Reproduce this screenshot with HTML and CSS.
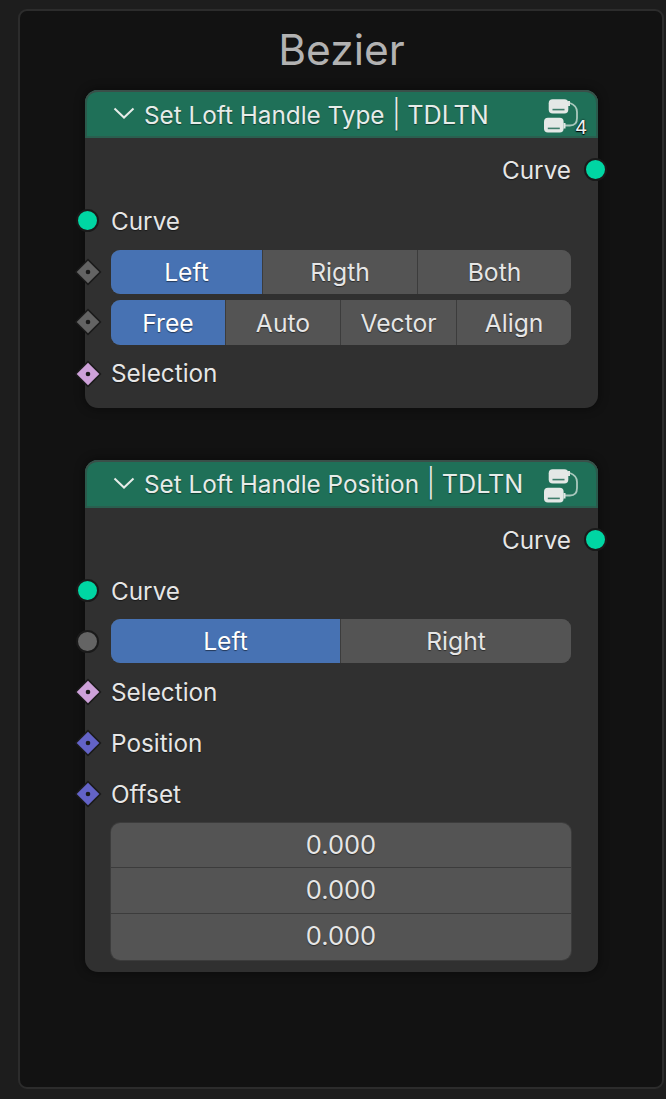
FILE: index.html
```html
<!DOCTYPE html>
<html lang="en">
<head>
<meta charset="utf-8">
<title>Bezier</title>
<link rel="stylesheet" href="styles.css">
</head>
<body>
<svg class="defs" width="0" height="0" aria-hidden="true">
  <defs>
    <symbol id="diamond" viewBox="0 0 28 28">
      <polygon points="14,0.5 27.5,14 14,27.5 0.5,14" fill="#1a1a1a"/>
      <polygon class="dfill" points="14,2.7 25.3,14 14,25.3 2.7,14"/>
      <circle cx="14" cy="14" r="2.3" fill="#1a1a1a"/>
    </symbol>
    <symbol id="nodeicon" viewBox="0 0 36 36">
      <path d="M27 5c4 1.500 7 4 7 9v6c0 5-3 7.500-7 7.500h-5" fill="none" stroke="#a9c8bd" stroke-width="1.800"/>
      <rect x="5.700" y="1.200" width="19.600" height="14.300" rx="4" fill="#e4e8e6"/>
      <rect x="9.500" y="10.800" width="12" height="1.600" fill="#3f7d6b"/>
      <rect x="1" y="19.700" width="19.600" height="14.800" rx="4" fill="#e4e8e6"/>
      <rect x="4.800" y="29.600" width="12" height="1.600" fill="#3f7d6b"/>
      <rect x="25" y="3" width="2" height="5" fill="#dfe6e3"/>
      <rect x="20.500" y="25" width="2" height="5.500" fill="#dfe6e3"/>
    </symbol>
  </defs>
</svg>
<main class="frame">
  <h1 class="title">Bezier</h1>

  <section class="node node-type">
    <header class="head">
      <svg class="chev" viewBox="0 0 22 12"><path d="M1.500 1.500 11 10.500l9.500-9"/></svg>
      <span class="head-text">Set Loft Handle Type<span class="sep">|</span><span class="tag">TDLTN</span></span>
      <svg class="nicon"><use href="#nodeicon"/></svg>
      <span class="count">4</span>
    </header>
    <div class="body">
      <div class="row right"><span>Curve</span><i class="sock circle teal out"></i></div>
      <div class="row"><i class="sock circle teal"></i><span>Curve</span></div>
      <div class="ctl-row">
        <svg class="sock dia grey"><use href="#diamond"/></svg>
        <div class="seg seg-lrb">
          <button class="on">Left</button><button>Rigth</button><button>Both</button>
        </div>
      </div>
      <div class="ctl-row second">
        <svg class="sock dia grey"><use href="#diamond"/></svg>
        <div class="seg seg-4">
          <button class="on">Free</button><button>Auto</button><button>Vector</button><button>Align</button>
        </div>
      </div>
      <div class="row tall"><svg class="sock dia pink"><use href="#diamond"/></svg><span>Selection</span></div>
    </div>
  </section>

  <section class="node node-pos">
    <header class="head">
      <svg class="chev" viewBox="0 0 22 12"><path d="M1.500 1.500 11 10.500l9.500-9"/></svg>
      <span class="head-text">Set Loft Handle Position<span class="sep">|</span><span class="tag">TDLTN</span></span>
      <svg class="nicon"><use href="#nodeicon"/></svg>
    </header>
    <div class="body">
      <div class="row right"><span>Curve</span><i class="sock circle teal out"></i></div>
      <div class="row"><i class="sock circle teal"></i><span>Curve</span></div>
      <div class="ctl-row">
        <i class="sock circle greyc"></i>
        <div class="seg seg-2">
          <button class="on">Left</button><button>Right</button>
        </div>
      </div>
      <div class="row"><svg class="sock dia pink"><use href="#diamond"/></svg><span>Selection</span></div>
      <div class="row"><svg class="sock dia blue"><use href="#diamond"/></svg><span>Position</span></div>
      <div class="row"><svg class="sock dia blue"><use href="#diamond"/></svg><span>Offset</span></div>
      <div class="vec">
        <div class="num">0.000</div>
        <div class="num">0.000</div>
        <div class="num">0.000</div>
      </div>
    </div>
  </section>
</main>
</body>
</html>
```
FILE: styles.css
```css
* { box-sizing: border-box; }
html, body { margin: 0; padding: 0; }
body {
  width: 666px;
  height: 1099px;
  overflow: hidden;
  background: #1d1d1d;
  font-family: Inter, "Liberation Sans", sans-serif;
  color: #e6e6e6;
}
.defs { display: block; height: 0; }
.frame {
  margin: 9px 2px 0 18px;
  height: 1080px;
  border: 2px solid #2c2c2c;
  border-radius: 9px;
  background: #121212;
  padding-left: 65px;
}
.title {
  margin: 0;
  width: 513px;
  height: 79px;
  padding-top: 12px;
  text-align: center;
  font-size: 42.500px;
  line-height: 54px;
  font-weight: 400;
  color: #b2b2b2;
}
.node {
  width: 513px;
  background: #303030;
  border-radius: 13px;
  box-shadow: 0 0 9px 2px rgba(0, 0, 0, .35);
}
.node-type { height: 318px; margin-bottom: 52px; }
.node-pos { height: 512px; }
.head {
  position: relative;
  display: flex;
  align-items: center;
  height: 48px;
  padding-left: 28px;
  background: #1f7058;
  border-radius: 13px 13px 0 0;
  box-shadow: inset 0 2px 0 #3a4f49, inset 2px 0 0 #2a5a4c, inset -2px 0 0 #2a5a4c, inset 0 -2px 0 #2a5f4f;
}
.chev {
  width: 22px;
  height: 12px;
  margin: -3px 9px 0 0;
  fill: none;
  stroke: #e6ece9;
  stroke-width: 2;
}
.head-text {
  padding-top: 2px;
  font-size: 24.300px;
  line-height: 48px;
  color: #e6ece9;
  white-space: nowrap;
  text-shadow: 0 1px 1px rgba(0, 0, 0, .45);
}
.node-pos .head-text { padding-top: 0; }
.sep {
  margin: 0 6.500px 0 7.500px;
  font-size: 28px;
  line-height: 1;
  font-weight: 300;
}
.tag { font-size: 25.200px; line-height: 1; }
.nicon {
  position: absolute;
  left: 458px;
  top: 8px;
  width: 36px;
  height: 36px;
}
.count {
  position: absolute;
  left: 490px;
  top: 26px;
  font-size: 19px;
  line-height: 24px;
  color: #eef2f0;
  text-shadow: 0 0 2px #000, 0 1px 1px #000;
}
.body {
  padding: 6px 27px 0 26px;
}
.row, .ctl-row { position: relative; }
.row {
  display: flex;
  align-items: center;
  height: 51px;
  font-size: 24.300px;
  text-shadow: 0 1px 1px rgba(0, 0, 0, .5);
}
.row.right { justify-content: flex-end; }
.row.tall { height: 52px; }
.ctl-row { height: 50px; padding-top: 4px; }
.ctl-row.second { height: 51px; }
.node-pos .ctl-row { padding-top: 3px; }
.sock { position: absolute; display: block; }
.circle {
  width: 23px;
  height: 23px;
  left: -35px;
  top: 50%;
  margin-top: -11.500px;
  border-radius: 50%;
  border: 2px solid #1a1a1a;
}
.circle.out { left: auto; right: -36px; }
.teal { background: #00d6a3; }
.greyc { background: #646464; margin-top: -11px; }
.dia {
  width: 28px;
  height: 28px;
  left: -37.200px;
  top: 50%;
  margin-top: -13.500px;
}
.grey { --d: #636363; }
.pink { --d: #cda1d9; }
.blue { --d: #6363c7; }
.dfill { fill: var(--d); }
.seg {
  display: grid;
  height: 44px;
  border-radius: 9px;
  overflow: hidden;
  background: #545454;
  box-shadow: inset 0 0 0 1px #3c3c3c;
}
.seg-lrb { grid-template-columns: 151px 155px 154px; }
.seg-4 { grid-template-columns: 114px 115px 116px 115px; height: 45px; }
.seg-2 { grid-template-columns: 229px 231px; }
button {
  font: inherit;
  font-size: 24.700px;
  color: #e6e6e6;
  background: #545454;
  border: 0;
  border-left: 1px solid #3c3c3c;
  padding: 0;
  margin: 0;
  text-shadow: 0 1px 1px rgba(0, 0, 0, .5);
}
button.on {
  background: #4772b3;
  border-left: 0;
  color: #fff;
}
.vec {
  margin-top: 4px;
  border-radius: 9px;
  overflow: hidden;
  background: #545454;
  box-shadow: 0 0 0 1px #3c3c3c;
}
.num {
  height: 45.400px;
  text-align: center;
  font-size: 25.500px;
  line-height: 44px;
  text-shadow: 0 1px 1px rgba(0, 0, 0, .5);
  border-bottom: 1px solid #3c3c3c;
}
.num:last-child { height: 46.200px; border-bottom: 0; }
```
